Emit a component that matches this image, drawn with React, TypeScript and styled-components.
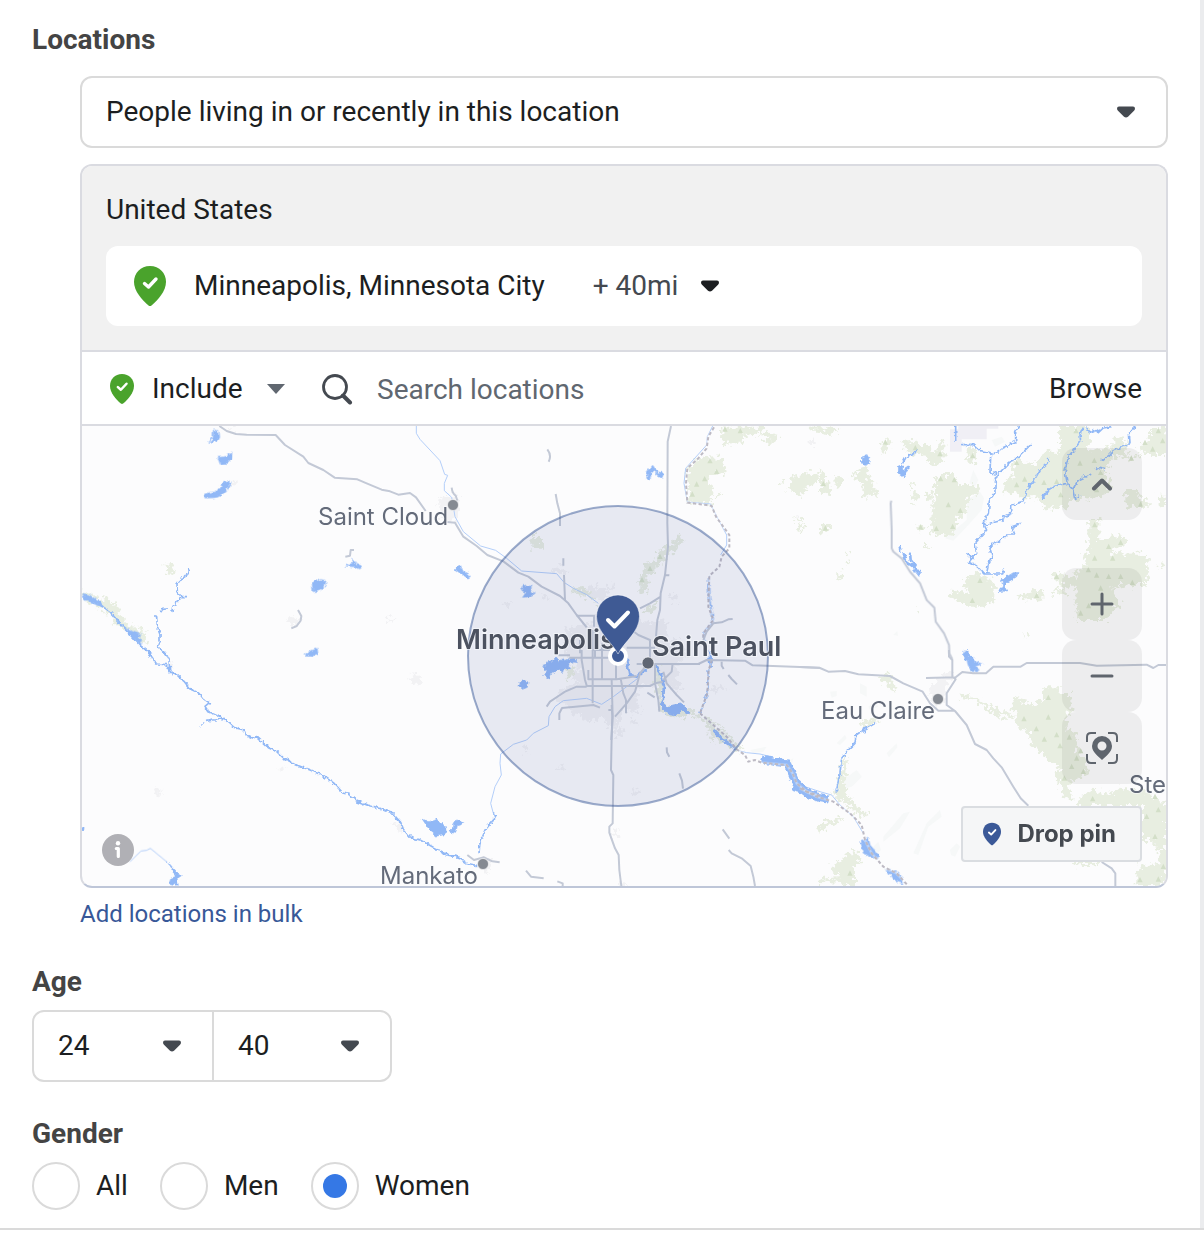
import React, { useId, useState } from "react";
import styled, { createGlobalStyle, css } from "styled-components";

const GlobalStyle = createGlobalStyle`
  *, *::before, *::after { box-sizing: border-box; }
  body {
    margin: 0;
    background: #fff;
    font-family: Roboto, "Liberation Sans", sans-serif;
    font-size: 28px;
    line-height: 32px;
    color: #1c1e21;
  }
  button, input, select { font: inherit; color: inherit; }
`;

/* ---------- layout ---------- */

const Page = styled.div`
  border-bottom: 2px solid #dadada;
  background: #fff;
`;

const Sheet = styled.main`
  border-right: 4px solid #ebecee;
`;

const Form = styled.form`
  display: flex;
  flex-direction: column;
  gap: 36px;
  padding: 24px 32px 18px;
`;

const Section = styled.section`
  display: flex;
  flex-direction: column;
`;

const Heading = styled.h2<{ $gap: number }>`
  margin: 0 0 ${(p) => p.$gap}px;
  font-size: 28px;
  line-height: 32px;
  font-weight: 700;
  color: #444;
`;

const Indented = styled.div`
  display: flex;
  flex-direction: column;
  gap: 16px;
  margin-left: 48px;
`;

/* ---------- selects ---------- */

const SelectShell = styled.div<{ $caretInset: number }>`
  display: grid;
  align-items: center;
  > * { grid-area: 1 / 1; }
  > svg {
    justify-self: end;
    margin-right: ${(p) => p.$caretInset}px;
    pointer-events: none;
  }
`;

const bare = css`
  appearance: none;
  margin: 0;
  padding: 0;
  border: 0;
  background: none;
  outline: none;
`;

const BoxSelect = styled.select`
  ${bare}
  width: 100%;
  height: 68px;
  padding: 0 56px 0 24px;
  cursor: pointer;
`;

const Bordered = styled.div`
  border: 2px solid #dadada;
  border-radius: 12px;
  background: #fff;
`;

const InlineSelect = styled.select<{ $width: number; $color: string }>`
  ${bare}
  width: ${(p) => p.$width}px;
  height: 40px;
  color: ${(p) => p.$color};
  cursor: pointer;
`;

const AgeRow = styled(Bordered)`
  display: grid;
  grid-template-columns: 1fr 1fr;
  width: 360px;
  > * + * { border-left: 2px solid #dadada; }
`;

const RoundedCaret = ({ color = "#444950" }: { color?: string }) => (
  <svg width="18" height="12" viewBox="0 0 18 12" aria-hidden="true">
    <path
      d="M2 0.500H16Q18 0.500 18 2.500Q18 3.800 17 4.800L11 10.800Q9 12.400 7 10.800L1 4.800Q0 3.800 0 2.500Q0 0.500 2 0.500Z"
      fill={color}
    />
  </svg>
);

const SharpCaret = () => (
  <svg width="18" height="10" viewBox="0 0 18 10" aria-hidden="true">
    <path d="M0 0H18L9 10Z" fill="#606770" />
  </svg>
);

/* ---------- location panel ---------- */

const Panel = styled.div`
  border: 2px solid #dadbe1;
  border-bottom-color: #bec6d8;
  border-radius: 12px;
  overflow: hidden;
`;

const Chosen = styled.div`
  display: flex;
  flex-direction: column;
  gap: 20px;
  padding: 28px 24px 24px;
  background: #f1f1f1;
`;

const Country = styled.h3`
  margin: 0;
  font-size: 28px;
  line-height: 32px;
  font-weight: 400;
`;

const PlaceRow = styled.div`
  display: flex;
  align-items: center;
  height: 80px;
  padding: 0 28px;
  border-radius: 12px;
  background: #fff;
`;

const PlaceName = styled.span`
  margin: 0 48px 0 28px;
`;

const SearchRow = styled.div`
  display: flex;
  align-items: center;
  height: 76px;
  padding: 2px 24px 0 28px;
  border-top: 2px solid #dadbe1;
  border-bottom: 2px solid #dadbe1;
  background: #fff;
`;

const IncludeGroup = styled.div`
  display: flex;
  align-items: center;
  gap: 18px;
  margin-right: 36px;
`;

const SearchField = styled.label`
  display: flex;
  flex: 1;
  align-items: center;
  gap: 24px;
  min-width: 0;
`;

const SearchInput = styled.input`
  ${bare}
  flex: 1;
  min-width: 0;
  height: 40px;
  &::placeholder { color: #606770; opacity: 1; }
`;

const TextButton = styled.button`
  ${bare}
  cursor: pointer;
`;

const BulkLink = styled.a`
  align-self: flex-start;
  margin-top: -6px;
  font-size: 24px;
  line-height: 32px;
  color: #385898;
  text-decoration: none;
`;

const Pin = ({ width, height, color }: { width: number; height: number; color: string }) => (
  <svg width={width} height={height} viewBox="0 0 32 40" aria-hidden="true">
    <path d="M16 0C6.500 0 0 7 0 16C0 25 8 34 14.500 39.400Q16 40.600 17.500 39.400C24 34 32 25 32 16C32 7 25.500 0 16 0Z" fill={color} />
    <path d="M10.500 17.500L14.500 21L22 13" fill="none" stroke="#fff" strokeWidth="3.400" strokeLinecap="round" strokeLinejoin="round" />
  </svg>
);

const SearchIcon = () => (
  <svg width="32" height="31" viewBox="0 0 32 31" aria-hidden="true">
    <circle cx="14" cy="13" r="11.500" fill="none" stroke="#444950" strokeWidth="2.800" />
    <path d="M22 21.500L29 28.500" stroke="#444950" strokeWidth="4" strokeLinecap="round" />
  </svg>
);

/* ---------- map ---------- */

const MapFrame = styled.div`
  position: relative;
  height: 460px;
  background: #fcfcfd;
  box-shadow: -2px 0 #bec6d8, 2px 0 #bec6d8;
`;

const MapCanvas = styled.svg`
  display: block;
  width: 100%;
  height: 100%;
`;

const MapLabel = styled.text<{ $major?: boolean }>`
  font-family: Inter, "Liberation Sans", sans-serif;
  font-size: ${(p) => (p.$major ? 27 : 24)}px;
  font-weight: ${(p) => (p.$major ? 600 : 400)};
  fill: ${(p) => (p.$major ? "#4c5260" : "#646b7a")};
  stroke: rgba(250, 251, 253, 0.6);
  stroke-width: 2px;
  paint-order: stroke;
`;

const Controls = styled.div`
  position: absolute;
  top: 22px;
  right: 24px;
  display: flex;
  flex-direction: column;
  gap: 48px;
`;

const ZoomGroup = styled.div`
  display: flex;
  flex-direction: column;
`;

const MapButton = styled.button`
  ${bare}
  display: grid;
  place-items: center;
  width: 80px;
  height: 72px;
  border-radius: 14px;
  background: rgba(0, 0, 0, 0.06);
  cursor: pointer;
`;

const InfoButton = styled.button`
  ${bare}
  position: absolute;
  left: 20px;
  bottom: 20px;
  display: grid;
  border-radius: 50%;
  cursor: pointer;
`;

const DropPin = styled.button`
  ${bare}
  position: absolute;
  right: 24px;
  bottom: 24px;
  display: flex;
  align-items: center;
  gap: 16px;
  height: 56px;
  padding: 0 24px 0 20px;
  border: 2px solid #dadde1;
  border-radius: 4px;
  background: #f5f6f7;
  font-family: Inter, "Liberation Sans", sans-serif;
  font-size: 24px;
  font-weight: 700;
  color: #444950;
  cursor: pointer;
`;

type Tile = "nw" | "n" | "ne" | "sw" | "s" | "se" | "core";
type Shapes = Partial<Record<Tile, string>>;

/* Each tile is drawn at three units per pixel; these are the tile origins. */
const origins: Record<Tile, [number, number]> = {
  nw: [-2, -6],
  n: [358, -6],
  ne: [738, -6],
  sw: [-2, 224],
  s: [358, 224],
  se: [718, 224],
  core: [458, 114],
};

const woods: Shapes = {
  nw: "M255 424l8 10 12 0 4 8 12 4-10 10-8 10-8-8zM0 508L30 520 62 545 80 533 112 560 122 585 145 610 200 640 196 672 178 668 140 625 112 618 95 605 98 592 60 562 15 540z",
  n: "M848 20H970L965 40 910 45 908 68 845 72zM962 38l20-5 30 8-2 20-30 8zM760 125L790 110 850 115 857 157 810 165 800 195 818 205 820 222 860 222 812 230 815 250 745 248 742 150zM1042 205L1060 165 1078 168 1110 155 1130 190 1100 200 1092 225 1070 220zM1068 280l10 25 20 2-20 35-6-30zM1022 183h12v8h-12zM1112 160h24v20h-24zM1112 20h28v12h-28zM274 348h32v38h-32zM598 462h24v50l-24 10zM610 430L640 425 655 395 690 375 715 345 730 355 715 385 685 400 670 425 635 460 612 465zM605 575l40-25 8 14-30 22z",
  ne: "M720 18H800L810 60 800 90 830 95 850 85 H880V55l20-5 20 10v52h50v-15l-20-10 40-35V18h50V105H950L945 122 880 108 870 130 850 160 875 190 850 230 800 235 750 240 745 265H670L660 235 600 235 590 215 550 220 550 190 580 165V120L650 135 670 95H720zM365 165H405L412 195 480 195 475 225 440 235 443 265 428 290 410 292 405 350 360 345 333 340 335 275 345 230 345 180zM915 210h40v25h28v28h-65zM805 300h33v65L870 350 900 345 922 355 905 380 870 385 880 400 983 402V495H940L880 500 885 530 905 560 880 568 860 600H770V500H745L740 515 725 525 692 515 735 500 695 470 705 458 745 468 770 480V445H793V400L805 395zM435 475L470 455 480 470 510 475 525 500 520 545 480 560 455 560 390 530 390 515 450 518 440 500 430 500zM590 530l60-20 20 0 0 30-20 5zM250 65L290 62 300 75 330 75 335 90 355 90V60h15V90L375 125 355 130 345 140 325 130 320 108 285 105 255 90zM180 75l20-18 12 10-5 20-14 14-12-10zM440 85l10-5 15 5 3 40-22 4zM0 155l15 0 0 30 18 10 0 20-33 10zM42 172h24v22l-10 10-12-8zM95 180L115 150 145 145 145 180 165 195 175 225 135 230 125 185zM273 220h22v25h-22zM318 215h20v30h-20zM0 315l38 0-10 15-14 15-14-10zM288 322l20-8 14 8-20 12zM315 375h14v14h-14zM52 455h12v22h-12zM1010 230h28v25h-18zM1018 440l10-10 8 15zM0 22l30 0 30 8-40 15-20-5zM270 196h10v10h-10zM76 395h10v8h-10zM80 420h8v10h-8zM292 565h8v12h-8zM614 638h6v14h-6z",
  s: "M640 42l20 10 10 50-2 60 30 15 50 0 25 20 20 0 40 30 40 35 35 35-20 5-50-30-15-20 0 20-14 0 0-30-20-30-20-8-10-10-40 10-45-8-14-16zM380 55l18-12 4 20-8 20-14 5zM1128 535l12-5v15z",
  se: "M92 432L110 425 122 360 128 320 140 325 138 420 160 460 210 495 180 500 160 480zM50 535l20-20 45-12 12 4-10 10-30 8-10 20-22-4zM125 625L160 605 182 605 184 640 165 640 165 708H125l10-10-78-2 5-10 60-5-25-20 5-20 30-10zM478 135L500 132 545 150 580 175 600 180 635 190 645 200 600 200 580 195 560 175 520 150 485 148zM635 150l12-12 20 10 2 20 30-15 0 15 30-18 0-38h50v20h35v60L800 180 800 240 830 250 830 300 862 340 862 375 810 390 805 410 815 445H790L785 420 765 375 780 355 740 330 725 310 692 280 690 250 650 225 650 190 635 180zM845 440L870 425 885 415 900 430 930 435 960 415 1000 420 1050 430 1070 450 1098 452V708H1010L1015 650 1075 640 1080 600 1060 590 1060 570 1026 570 1026 468H830zM820 636h90l-20 10-60 0zM235 90l20-15 15-13 5 40 15 15-20 5-5-25-20 4zM180 220l40-15 15 5-20 15-30 10z",
  core: "M95 145l30 0 30 15 20 20-10 8-30-20-40-10z",
};

const fainter: Shapes = {
  ne: "M440 240L480 215 492 235 485 270 440 320 400 362 375 355 440 300zM448 190l12-40 15 30-10 20zM515 60l30-10 10 15-30 15zM220 645l12-12 2 14z",
  se: "M90 125l20-2 0 15-15 5zM180 100l20 10 0 30-20-10zM205 170l20-15 10 15-25 10zM260 310l30-30 2 12-25 30zM340 610l40-90 40-40 5 20-40 30-30 85zM250 560l60-70 20-5-30 50-50 40zM130 390l40-30 15 20-30 30-20 5zM110 280l25-25 5 10-20 20zM450 600l20-20 10 10-15 30-12-5zM220 590l15-15 8 25-20 15z",
  s: "M930 300l50-10-10 15-30 5zM1040 335l20-10-5 20z",
};

const towns: Shapes = {
  nw: "M450 18l14 0-2 8-8 0zM450 182l16 0 2 12-14 6zM1075 240l20-8 30-10 10 20-5 40-20 25-20-10-5-25-10-5zM622 592l30 0 2 22-20 5-12-10zM918 585l20 6 3 6-12 8-10-3z",
  sw: "M268 32l10 4 4 14-12 2zM988 78l20-4 12 8-2 20-18 5zM222 420l26-2 6 8-12 4-6 12-12-10zM598 358l14-8 6 6-8 10-10 0zM940 518l18-6 14 30-14 2z",
  n: "M0 235l20-5 30 0 10 30-15 40-25-5-20-20zM335 450l30-12 15 4-2 20-40 0zM440 505l22-10 6 20-15 5zM500 500l20-10 2 20-15 4zM190 545l14 0 8 8-8 12zM298 520l20 4 10 8-15 4zM1105 60l18-8-2 26-14-4zM1068 278l10 4-2 10z",
  core: "M75 350L75 275 100 255 145 255 165 225 200 210 240 220 300 240 340 250 375 240 385 300 420 300 440 350 400 380 420 400 410 420 430 450 410 460 395 440 370 430 300 440 290 480 300 510 270 520 240 500 240 560 205 560 190 530 150 550 130 530 90 520 90 500 60 490 50 480 60 450 110 430 90 400 120 390 100 370zM225 570l20-8 4 20-12 12-12-6zM270 535l12-2 4 18-14 2zM390 170l20-10 4 20-12 8zM150 165l20-25 20 0 20 30-30 10z",
  s: "M250 295l14-4 4 10-12 8zM355 348l14-4 4 14-14 2zM570 430l20-16 14 12-20 14zM510 545l20-8 2 14-15 16zM130 620l25 15-5 25-20 8zM540 700l20 0 0 8-20 0zM808 110l50 0 2 10-20 0-30 4z",
  se: "M390 110l20-20 40-25 12 5-25 40 0 50-25 10-20-30zM840 435l30-6-10 10z",
};

const reserve: Shapes = { ne: "M390 28H415V18H535V26H500V58H425V95H390z" };

const rivers: Shapes = {
  nw: "M65 558L90 575 128 620 180 676 205 695 215 718M328 442L318 468 302 478 291 492 292 520 302 530H318M302 530L278 560 276 573M258 567L248 568 242 577M222 587L230 590 232 620 240 640V660L232 680 250 695 266 713",
  sw: "M205 0L215 20 230 42 258 44 272 66 292 76 312 94 330 117 355 128 372 148 388 158 374 170 383 185 400 192 435 208 462 232 492 240 498 256 515 264 530 260 565 293 590 305 612 325 650 345 690 360 725 375 760 398 785 425 805 430 830 450 860 465 900 475 935 488 962 517 970 538 990 562 1020 570 1060 592 1100 612 1140 623M828 455l20 8M375 178l14 8M436 208L400 210 378 214M370 218l-10 10M266 23L268 45 270 70",
  s: "M0 605L20 615 50 620 80 640 112 647M160 490L165 505 135 540 120 575 117 610M808 0L816 40 805 60 802 130 780 190",
  n: "M806 470V520L812 560 820 600 790 640 792 660",
  ne: "M407 18V65M424 74L460 73 480 92 510 98 520 105 545 85 587 65V35L596 18M635 72L600 105 568 128 532 165 510 155 512 110M532 165L525 190 525 220 508 240 505 280 490 310 500 330 465 370 470 400 447 425 470 438 492 462H548L550 445M442 400l16 18M492 315L550 300 552 290 575 280V255L610 245 625 200 640 185 660 150 687 125 685 112M605 310L575 320 585 345 560 345 545 358 530 370 515 370 510 385 517 410 506 430 500 460M790 20L780 45 782 62 765 85 745 110 735 155 742 190 715 195 700 200 685 210 665 238M945 20L928 40 930 70 880 92 865 108 845 122M742 190L758 208 775 180 815 162M825 150 l15-8 15 4M758 208L765 240M772 232l8-6M800 22L808 38 830 28 835 38 850 24 875 20M292 88L280 100 258 112 248 130M268 138l-14 24",
  se: "M228 218L205 232 190 240 196 250M190 240L168 255 165 280 145 300 125 325 120 370 108 425",
};

const wideRivers: Shapes = {
  core: "M260 352L268 405 290 410 320 385M345 375L362 400 372 440 367 500",
  ne: "M238 378L242 395M250 400L258 425 280 440 300 465M270 398L272 420 288 440M280 450L305 455",
  s: "M820 240L850 270 887 296M808 20L812 45",
};

const bigRiver: Shapes = {
  s: "M965 328L1000 335 1040 340 1055 370 1068 400 1100 428 1140 445",
  se: "M-20 412L10 420 40 438 85 446",
};

const thinRivers: Shapes = {
  nw: "M1009 18V40L1020 58 1050 90 1080 122 1094 163 1103 166 1093 190V212L1115 232 1125 290 1150 335 1202 378 1247 391 1280 415 1325 453 1430 461 1452 487 1480 505 1520 524 1555 550",
  n: "M818 18L802 50 800 75 737 145 732 190 742 246 812 252 828 285 860 345V375L842 405",
  s: "M600 80L560 110 520 140 485 163 440 145 370 152 345 170 327 200 325 227 280 250 260 270 220 283 182 312 180 340 184 375 165 410 152 460 160 490M880 298L920 308 960 312 1000 322",
  sw: "M150 635L183 603 200 601 211 595 262 637",
  se: "M0 405L60 425 95 435 120 465 160 500 190 550",
};

const lakes: Shapes = {
  nw: "M400 30l14 2 2 20-5 10-24 5 12-15zM414 112l22-2 20-14-2 20-14 14-20 2zM373 222L410 214 432 186Q445 178 454 190L436 214Q420 232 405 233L375 234zM820 417l10 16 16 6-10 8-10-6-28-3 18-8zM696 488l22-9 20 2-4 18-16 14-19 2zM672 705l16-10 24-10 2 20-14 2zM8 520L30 526 65 550 68 563 40 550 15 540zM128 620L150 632 175 640 186 643 172 650 185 660 180 672 160 655z",
  sw: "M1026 506l20 10 22-10 16 14 16 24-8 10-22 4-20-16zM6 530h6v12h-6zM262 635L285 660 304 677 288 688 292 706 268 700 272 685 286 680 280 662z",
  s: "M0 525l18 6 4 14-12 8-10 2zM30 540L40 530 45 512 55 510 70 520 52 526 47 550 32 547zM232 104l18-14 14 6-2 16-14 6z",
  n: "M620 178L622 155 638 136 648 150 656 165 660 155 670 160 665 175 650 165 645 152 634 158 630 176zM44 447L62 437 70 455 84 462 88 474 70 468 58 458zM243 512L252 492 262 502 275 495 272 510 282 520 270 530 248 532 258 518z",
  core: "M5 380L20 375 30 358 40 362 50 352 55 366 68 355 75 362 100 352 112 368 98 366 84 378 92 385 72 385 68 400 55 388 45 400 35 395 30 418 10 405 22 396z",
  ne: "M545 480L580 458 594 458 590 470 565 485 550 500 565 512 535 515 548 495zM124 112l12-5 14 6-4 18-14 6-8-8zM235 140l10-5 5 15 16-10-14 34-16-12zM430 705l10-14 6 14 20 15-30 0z",
  s2: "",
  se: "M490 0L502 15 525 28 530 35 545 42 525 50 538 60 518 66 505 50 500 25zM182 575L205 565 210 585 236 615 230 628 190 610zM258 658l30 8 20 20 2 16-30-12z",
} as Shapes;

const cityLake: Shapes = {
  core: "M365 492L385 500 400 495 425 492 452 518 442 522 425 512 410 524 380 520 368 508z",
};

const stateLine: Shapes = {
  n: "M822 22L805 50 800 85 775 115 742 145 738 190 742 248 800 255 815 258 828 290 868 345V385L845 410 838 440 808 468 806 520 805 560 820 600 790 640V660",
  s: "M780 190L820 225 860 260 890 298 915 315 925 335 945 330 965 338 1040 345 1058 370 1070 400 1100 425 1140 438M816 30L806 60 802 130 780 190",
  se: "M0 415L50 440 100 455 150 490 185 525 195 570 215 610 250 650 290 670 325 708",
};

const roads: Shapes = {
  nw: "M418 18L440 33 468 42 500 44 587 45 615 75 670 110 685 129 730 150 764 173 832 178 860 190 905 209 930 214 955 224 990 219 1008 232 1037 273M1115 203q2 18 12 24l5 15M1102 306L1125 308 1150 350 1190 378 1222 405 1270 424 1315 458 1345 470 1385 500 1440 528 1465 550 1490 585 1520 622M822 390l-10 0-2 17-14 3M654 570l10 18-2 14-12 16-16 7",
  n: "M322 88q14 18 4 37M347 222L352 250 360 280V318M693 18L683 65 682 310 684 380 675 465 688 466M675 465L662 520 660 570 652 600 648 650M662 530L630 550 600 565M370 415V437M372 465L375 540M410 587H462V620M790 660L800 635 820 610 845 607 865 598 878 597",
  core: "M55 346H90M88 353H205M125 330V360L135 420 140 436M158 270V490M186 310V418M228 370V418M145 390V418H230L260 413 290 408M140 438H330L345 430 368 425M215 420L218 530 214 600M242 415L250 460 258 480V520M225 530L260 490 285 455 300 400 320 375M20 500L30 485 60 465 75 455 110 440H140M58 540V520L66 504 160 495 180 503M165 270 v80M290 372H480M260 323H345M275 270L295 285 330 300V370M345 370V430L355 480 358 515M398 370L395 395 370 420M370 395L380 430 410 465 432 487M322 458l22 14M205 510h14M160 330h60M120 300v40",
  s: "M515 165L517 200 515 260 513 360 520 375 518 520 508 530V548L525 595 536 615 538 660 544 708M640 42H775L800 30 915 32 938 46 1140 53M848 538l20 28M866 600L875 610 905 625 932 648 940 680 945 708M258 662l15 18 38 5M352 694l16 6v8M82 615l20 15 30-8 25 12 22 3M680 292l1 15 7 13M718 370l8 22 3 24M845 35v12l6 10M865 75l10 12 16 16",
  ne: "M214 242L212 250 215 330V385L220 395 245 415 270 455 300 490 320 540 343 563 347 605 372 640 387 675 388 700 397 718",
  se: "M0 51L60 54 85 65 135 63 175 73 270 78 310 100 368 125 390 160 415 182H465M447 0V20L457 30V80L467 88 440 130V165L465 183 500 225 525 282 560 300 580 325 605 352 640 410 662 445 685 467M378 84L467 82 487 66 520 70H558L580 50H662L680 39H840L890 47 1040 44 1060 54 1075 45H1100M905 636L935 655 946 670V708",
};

const trees: Partial<Record<Tile, number[][]>> = {
  n: [[855, 28], [901, 33], [810, 123], [794, 177], [830, 155], [757, 223], [770, 193], [660, 410], [630, 446], [606, 480]],
  ne: [[768, 33], [1015, 33], [1028, 63], [998, 88], [590, 128], [780, 130], [823, 122], [735, 145], [842, 158], [614, 178], [590, 195], [672, 188], [710, 185], [362, 177], [403, 180], [722, 225], [830, 210], [866, 197], [385, 255], [421, 272], [349, 326], [398, 320], [302, 322], [824, 315], [866, 380], [902, 368], [824, 415], [878, 415], [962, 253], [805, 450], [830, 466], [902, 470], [866, 470], [937, 488], [842, 505], [806, 558], [782, 580], [480, 482], [457, 542], [196, 67], [286, 84], [360, 102], [458, 108], [16, 325], [10, 192], [934, 115], [975, 68], [710, 470], [650, 527]],
  se: [[745, 143], [709, 237], [770, 255], [733, 268], [745, 202], [808, 262], [780, 288], [842, 303], [830, 325], [815, 350], [850, 365], [793, 385], [672, 207], [878, 447], [1065, 440], [1040, 500], [1065, 560], [1090, 650], [1020, 690], [1075, 688], [1075, 480], [150, 670]],
};

const Layer = ({ shapes, ...rest }: { shapes: Shapes } & React.SVGProps<SVGGElement>) => (
  <g {...rest}>
    {(Object.keys(origins) as Tile[])
      .filter((tile) => shapes[tile])
      .map((tile) => (
        <path
          key={tile}
          d={shapes[tile]}
          transform={`translate(${origins[tile][0]} ${origins[tile][1]}) scale(${1 / 3})`}
        />
      ))}
  </g>
);

const treePaths: Shapes = Object.fromEntries(
  Object.entries(trees).map(([tile, points]) => [
    tile,
    points!.map(([x, y]) => `M${x} ${y - 9}l8 16h-16z`).join(""),
  ]),
);

const MapArt = () => (
  <MapCanvas viewBox="0 0 1084 460" preserveAspectRatio="xMidYMid slice" role="img" aria-label="Map of the Minneapolis area">
    <defs>
      <filter id="ragged" x="0" y="0" width="1084" height="460" filterUnits="userSpaceOnUse" colorInterpolationFilters="sRGB">
        <feTurbulence type="fractalNoise" baseFrequency="0.220" numOctaves="3" seed="4" />
        <feDisplacementMap in="SourceGraphic" scale="14" xChannelSelector="R" yChannelSelector="G" />
      </filter>
      <filter id="wavy" x="0" y="0" width="1084" height="460" filterUnits="userSpaceOnUse" colorInterpolationFilters="sRGB">
        <feTurbulence type="fractalNoise" baseFrequency="0.250" numOctaves="2" seed="9" />
        <feDisplacementMap in="SourceGraphic" scale="5" xChannelSelector="R" yChannelSelector="G" />
      </filter>
    </defs>
    <Layer shapes={fainter} fill="#f6f8f8" />
    <g filter="url(#ragged)">
      <Layer shapes={towns} fill="#f2f2f4" />
      <Layer shapes={woods} fill="#e8eee1" />
    </g>
    <Layer shapes={reserve} fill="#f0eff5" />
    <Layer shapes={treePaths} fill="#d3dfc8" />
    <g fill="none" stroke="#91b8f6" strokeLinejoin="round">
      <Layer shapes={thinRivers} strokeWidth="3" stroke="#b3cef9" />
      <g filter="url(#wavy)">
        <Layer shapes={rivers} strokeWidth="5" />
        <Layer shapes={wideRivers} strokeWidth="8" />
        <Layer shapes={bigRiver} strokeWidth="24" />
        <Layer shapes={lakes} fill="#91b8f6" strokeWidth="2" />
        <Layer shapes={cityLake} fill="#91b8f6" strokeWidth="3" />
      </g>
    </g>
    <Layer shapes={stateLine} fill="none" stroke="#fff" strokeWidth="7" strokeOpacity="0.400" />
    <Layer shapes={stateLine} fill="none" stroke="#bdbac4" strokeWidth="6" strokeDasharray="10 7" />
    <Layer shapes={roads} fill="none" stroke="#c3c9d6" strokeWidth="6" strokeLinejoin="round" />

    <circle cx="536" cy="230" r="150" fill="#3f5598" fillOpacity="0.110" stroke="#385898" strokeOpacity="0.500" strokeWidth="2" />

    <g stroke="#fff" strokeOpacity="0.600" strokeWidth="1">
      <circle cx="371" cy="79" r="5.500" fill="#858a92" />
      <circle cx="401" cy="438" r="5.500" fill="#858a92" />
      <circle cx="856" cy="273" r="5.500" fill="#858a92" />
      <circle cx="566" cy="237" r="6" fill="#606673" />
    </g>
    <MapLabel x="236" y="99">Saint Cloud</MapLabel>
    <MapLabel x="739" y="293">Eau Claire</MapLabel>
    <MapLabel x="298" y="458">Mankato</MapLabel>
    <MapLabel x="1047" y="367">Ste</MapLabel>
    <MapLabel x="374" y="223" $major>Minneapolis</MapLabel>
    <MapLabel x="570" y="230" $major>Saint Paul</MapLabel>

    <circle cx="536" cy="230" r="8" fill="#3f5b96" stroke="#fff" strokeWidth="4" />
    <path d="M536 228C530 216 514.500 206 514.500 190.500A21.500 21.500 0 0 1 557.500 190.500C557.500 206 542 216 536 228Z" fill="#3f5a94" stroke="#fff" strokeOpacity="0.500" strokeWidth="1" />
    <path d="M526 194L532.500 200.500L546 186.500" fill="none" stroke="#fff" strokeWidth="4" strokeLinecap="round" strokeLinejoin="round" />
  </MapCanvas>
);

const stroke = { fill: "none", stroke: "#5f656d", strokeLinecap: "round", strokeLinejoin: "round" } as const;

const LocateIcon = () => (
  <svg width="32" height="32" viewBox="0 0 32 32" aria-hidden="true">
    <path {...stroke} strokeLinecap="butt" strokeWidth="2" d="M1 10V5Q1 1 5 1H10M22 1H27Q31 1 31 5V10M31 22V27Q31 31 27 31H22M10 31H5Q1 31 1 27V22" />
    <path fillRule="evenodd" d="M16 4A10 10 0 0 0 6 14C6 20 12 24 16 28C20 24 26 20 26 14A10 10 0 0 0 16 4ZM16 9.500A4.500 4.500 0 1 1 16 18.500A4.500 4.500 0 1 1 16 9.500Z" fill="#5f656d" />
  </svg>
);

const LocationMap = () => (
  <MapFrame>
    <MapArt />
    <Controls>
      <MapButton type="button" aria-label="Collapse map">
        <svg width="22" height="14" viewBox="0 0 22 14" aria-hidden="true">
          <path {...stroke} strokeWidth="4" d="M3 11.500L11 3.500L19 11.500" />
        </svg>
      </MapButton>
      <ZoomGroup>
        <MapButton type="button" aria-label="Zoom in">
          <svg width="24" height="24" viewBox="0 0 24 24" aria-hidden="true">
            <path {...stroke} strokeWidth="3" d="M12 2V22M2 12H22" />
          </svg>
        </MapButton>
        <MapButton type="button" aria-label="Zoom out">
          <svg width="24" height="4" viewBox="0 0 24 4" aria-hidden="true">
            <path {...stroke} strokeWidth="3" d="M2 2H22" />
          </svg>
        </MapButton>
        <MapButton type="button" aria-label="Centre on pin">
          <LocateIcon />
        </MapButton>
      </ZoomGroup>
    </Controls>
    <InfoButton type="button" aria-label="Map information">
      <svg width="32" height="32" viewBox="0 0 32 32" aria-hidden="true">
        <circle cx="16" cy="16" r="16" fill="#b0b0b5" />
        <circle cx="16" cy="9.300" r="2.200" fill="#fff" />
        <path d="M14.300 14.500H16.300V22.500" fill="none" stroke="#fff" strokeWidth="3.200" strokeLinecap="round" strokeLinejoin="round" />
      </svg>
    </InfoButton>
    <DropPin type="button">
      <Pin width={18} height={24} color="#3b5998" />
      Drop pin
    </DropPin>
  </MapFrame>
);

/* ---------- gender ---------- */

const RadioRow = styled.div`
  display: flex;
  gap: 32px;
`;

const RadioLabel = styled.label`
  display: flex;
  align-items: center;
  gap: 16px;
  cursor: pointer;
`;

const Radio = styled.input`
  appearance: none;
  display: grid;
  place-items: center;
  width: 48px;
  height: 48px;
  margin: 0;
  border: 2px solid #dadada;
  border-radius: 50%;
  background: #fff;
  &:checked::before {
    content: "";
    width: 24px;
    height: 24px;
    border-radius: 50%;
    background: #3578e5;
  }
`;

const genders = ["All", "Men", "Women"];
const ages = Array.from({ length: 48 }, (_, i) => i + 18);

const AgeSelect = ({ label, initial }: { label: string; initial: number }) => (
  <SelectShell $caretInset={31}>
    <BoxSelect aria-label={label} defaultValue={initial}>
      {ages.map((age) => (
        <option key={age}>{age}</option>
      ))}
    </BoxSelect>
    <RoundedCaret />
  </SelectShell>
);

export default function App() {
  const [gender, setGender] = useState("Women");
  const searchId = useId();

  return (
    <>
      <GlobalStyle />
      <Page>
        <Sheet>
          <Form onSubmit={(e) => e.preventDefault()}>
            <Section>
              <Heading $gap={20}>Locations</Heading>
              <Indented>
                <Bordered>
                  <SelectShell $caretInset={31}>
                    <BoxSelect aria-label="Location type">
                      <option>People living in or recently in this location</option>
                      <option>People living in this location</option>
                    </BoxSelect>
                    <RoundedCaret />
                  </SelectShell>
                </Bordered>
                <Panel>
                  <Chosen>
                    <Country>United States</Country>
                    <PlaceRow>
                      <Pin width={32} height={40} color="#4aa32c" />
                      <PlaceName>Minneapolis, Minnesota City</PlaceName>
                      <SelectShell $caretInset={0}>
                        <InlineSelect aria-label="Radius" $width={126} $color="#444950">
                          <option>+ 40mi</option>
                          <option>+ 50mi</option>
                        </InlineSelect>
                        <RoundedCaret color="#1c1e21" />
                      </SelectShell>
                    </PlaceRow>
                  </Chosen>
                  <SearchRow>
                    <IncludeGroup>
                      <Pin width={24} height={30} color="#4aa32c" />
                      <SelectShell $caretInset={0}>
                        <InlineSelect aria-label="Include or exclude" $width={133} $color="#1c1e21">
                          <option>Include</option>
                          <option>Exclude</option>
                        </InlineSelect>
                        <SharpCaret />
                      </SelectShell>
                    </IncludeGroup>
                    <SearchField htmlFor={searchId}>
                      <SearchIcon />
                      <SearchInput id={searchId} type="text" aria-label="Search locations" placeholder="Search locations" />
                    </SearchField>
                    <TextButton type="button">Browse</TextButton>
                  </SearchRow>
                  <LocationMap />
                </Panel>
                <BulkLink href="#bulk">Add locations in bulk</BulkLink>
              </Indented>
            </Section>

            <Section>
              <Heading $gap={12}>Age</Heading>
              <AgeRow>
                <AgeSelect label="Minimum age" initial={24} />
                <AgeSelect label="Maximum age" initial={40} />
              </AgeRow>
            </Section>

            <Section>
              <Heading $gap={12}>Gender</Heading>
              <RadioRow role="radiogroup" aria-label="Gender">
                {genders.map((name) => (
                  <RadioLabel key={name}>
                    <Radio type="radio" name="gender" checked={gender === name} onChange={() => setGender(name)} />
                    {name}
                  </RadioLabel>
                ))}
              </RadioRow>
            </Section>
          </Form>
        </Sheet>
      </Page>
    </>
  );
}
